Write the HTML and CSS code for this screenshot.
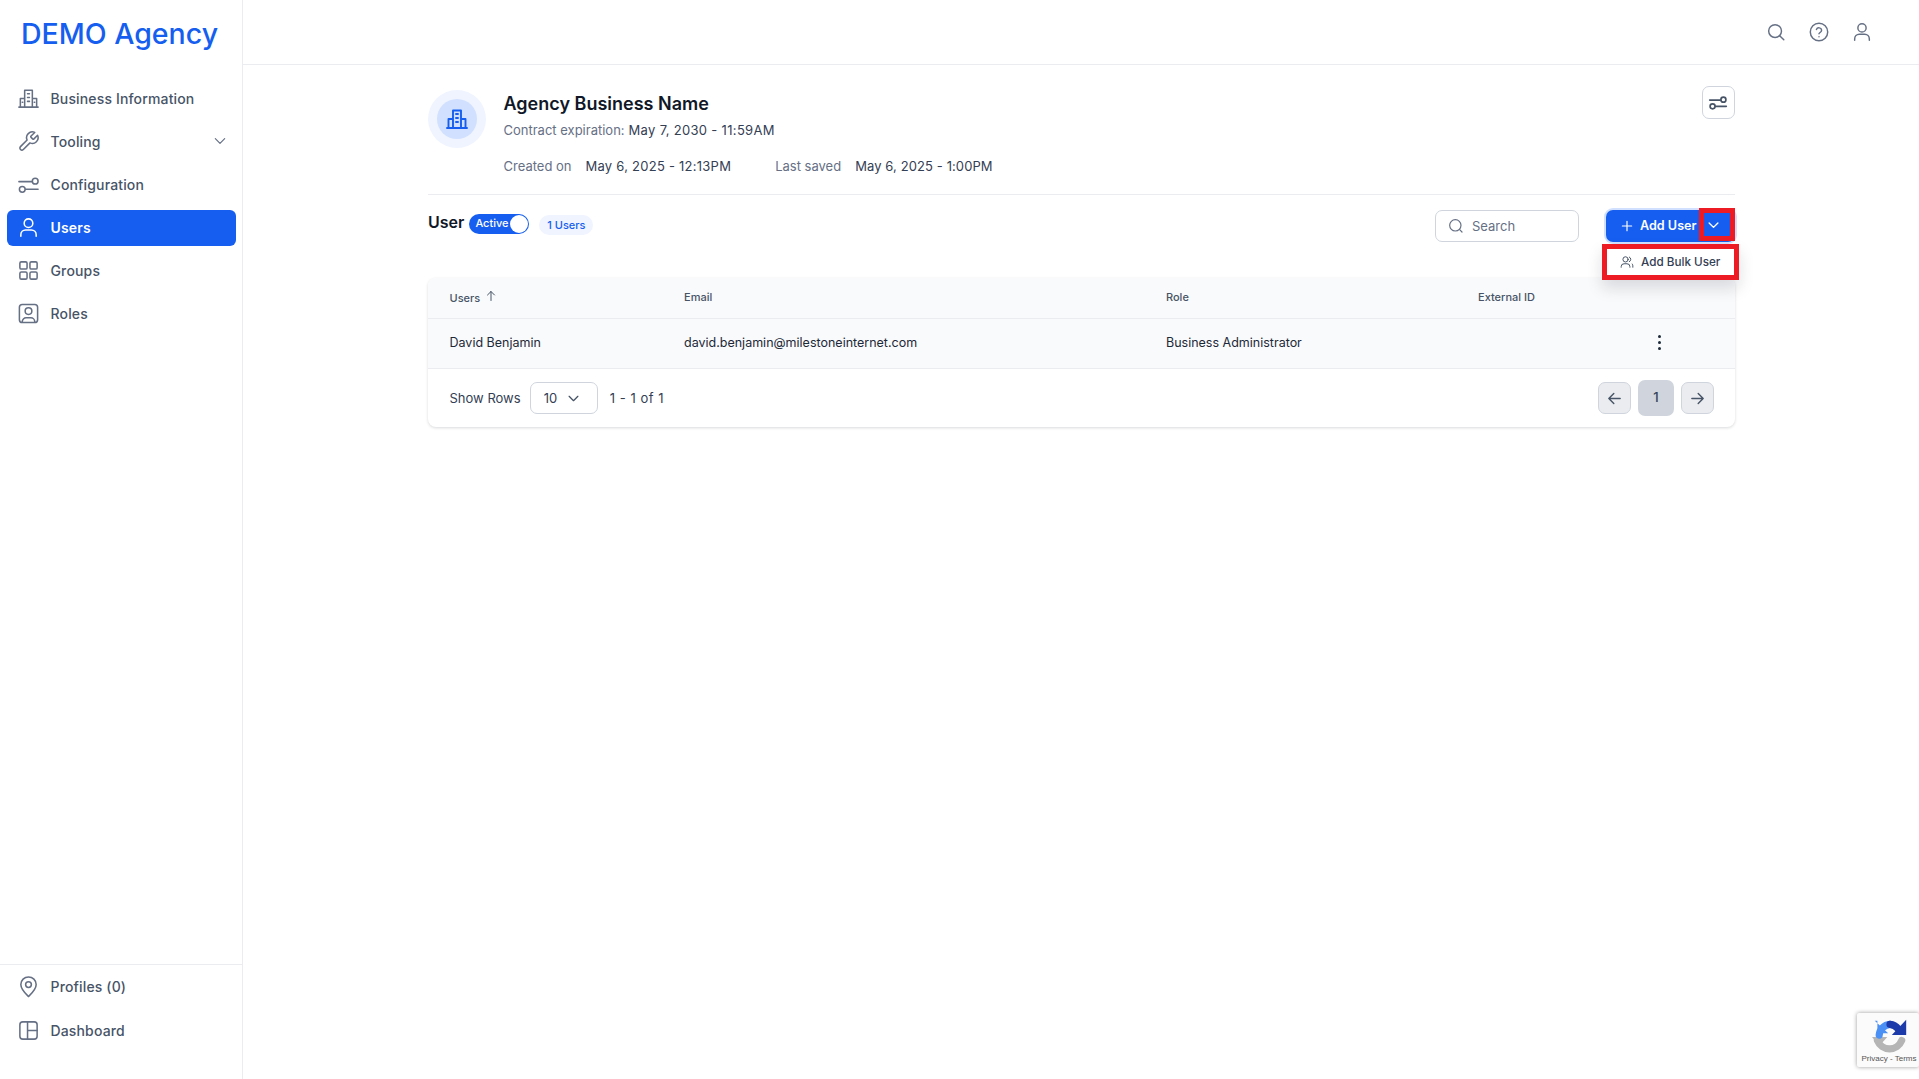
FILE: index.html
```html
<!DOCTYPE html>
<html lang="en">
<head>
<meta charset="utf-8">
<title>Users - DEMO Agency</title>
<link rel="stylesheet" href="styles.css">
</head>
<body>
<aside class="sidebar">
  <div class="logo">DEMO Agency</div>
  <nav class="nav">
    <a class="nav-item"><svg class="ico" viewBox="0 0 24 24"><path d="M2 21h20M3.500 21v-9h4.500M20.500 21v-9H16M8 21V3.500h8V21M11 7h2M11 11h2M11 15h2M5.500 16h.5M18 16h.5"/></svg><span>Business Information</span></a>
    <a class="nav-item"><svg class="ico" viewBox="0 0 24 24"><path d="M14.700 6.300a1 1 0 0 0 0 1.400l1.600 1.600a1 1 0 0 0 1.400 0l3.770-3.770a6 6 0 0 1-7.940 7.940l-6.910 6.910a2.120 2.120 0 0 1-3-3l6.910-6.910a6 6 0 0 1 7.940-7.940l-3.760 3.760z"/></svg><span>Tooling</span><svg class="nav-chev" viewBox="0 0 24 24"><path d="M5 8.500l7 7 7-7"/></svg></a>
    <a class="nav-item"><svg class="ico" viewBox="0 0 24 24"><path d="M2 9h14M9 17h13"/><circle cx="19" cy="8.500" r="3"/><circle cx="5.500" cy="17" r="3"/></svg><span>Configuration</span></a>
    <a class="nav-item active"><svg class="ico" viewBox="0 0 24 24"><circle cx="12" cy="7.500" r="4.500"/><path d="M4 21v-1.500a5 5 0 0 1 5-5h6a5 5 0 0 1 5 5V21"/></svg><span>Users</span></a>
    <a class="nav-item"><svg class="ico" viewBox="0 0 24 24"><rect x="3" y="3" width="7.500" height="7.500" rx="1.500"/><rect x="13.500" y="3" width="7.500" height="7.500" rx="1.500"/><rect x="3" y="13.500" width="7.500" height="7.500" rx="1.500"/><rect x="13.500" y="13.500" width="7.500" height="7.500" rx="1.500"/></svg><span>Groups</span></a>
    <a class="nav-item"><svg class="ico" viewBox="0 0 24 24"><rect x="2.500" y="2.500" width="19" height="19" rx="3"/><circle cx="12" cy="9.500" r="3.500"/><path d="M5.500 21v-.5a4 4 0 0 1 4-4h5a4 4 0 0 1 4 4v.5"/></svg><span>Roles</span></a>
  </nav>
  <div class="side-bottom">
    <a class="nav-item"><svg class="ico" viewBox="0 0 24 24"><path d="M12 22.500c-1-1-8-7-8-12.500a8 8 0 0 1 16 0c0 5.500-7 11.500-8 12.500z"/><circle cx="12" cy="10" r="3"/></svg><span>Profiles (0)</span></a>
    <a class="nav-item"><svg class="ico" viewBox="0 0 24 24"><rect x="3" y="3" width="18" height="18" rx="3"/><path d="M11 3v18M11 12h10"/></svg><span>Dashboard</span></a>
  </div>
</aside>

<div class="main">
  <header class="topbar">
    <svg class="top-ico" viewBox="0 0 24 24"><circle cx="11" cy="11" r="7"/><path d="M16 16l4.500 4.500"/></svg>
    <svg class="top-ico" viewBox="0 0 24 24"><circle cx="12" cy="12" r="9.500"/><path d="M9.200 9.300a2.900 2.900 0 0 1 5.600 1c0 1.900-2.800 2.400-2.800 3.700M12 17.200v.1"/></svg>
    <svg class="top-ico" viewBox="0 0 24 24"><circle cx="12" cy="7.500" r="4.500"/><path d="M4 21v-1.500a5 5 0 0 1 5-5h6a5 5 0 0 1 5 5V21"/></svg>
  </header>

  <section class="content">
    <div class="biz">
      <div class="avatar"><div class="avatar-in"><svg viewBox="0 0 24 24"><path d="M2 21h20M3.500 21v-9h4.500M20.500 21v-9H16M8 21V3.500h8V21M11 7h2M11 11h2M11 15h2"/></svg></div></div>
      <div class="biz-text">
        <h1>Agency Business Name</h1>
        <p class="contract"><span class="muted">Contract expiration:</span> May 7, 2030 - 11:59AM</p>
        <p class="dates"><span class="muted">Created on</span><span class="v1">May 6, 2025 - 12:13PM</span><span class="muted">Last saved</span><span class="v2">May 6, 2025 - 1:00PM</span></p>
      </div>
      <button class="settings"><svg viewBox="0 0 24 24"><path d="M2 8.500h13M9 16h13"/><circle cx="18.500" cy="8" r="3"/><circle cx="5.500" cy="16" r="3"/></svg></button>
    </div>

    <div class="toolbar">
      <h2>User</h2>
      <div class="toggle"><span>Active</span><i></i></div>
      <div class="count">1 Users</div>
      <div class="search"><svg viewBox="0 0 24 24"><circle cx="11" cy="11" r="8.500"/><path d="M17.500 17.500L21 21"/></svg><span>Search</span></div>
      <div class="add">
        <svg class="plus" viewBox="0 0 24 24"><path d="M12 4v16M4 12h16"/></svg><span>Add User</span>
        <svg class="add-chev" viewBox="0 0 24 24"><path d="M5 8l7 7 7-7"/></svg>
        <b class="mark mark-chev"></b>
        <div class="menu"><svg viewBox="0 0 24 24"><circle cx="9.500" cy="7.500" r="4.500"/><path d="M2 21v-1a5 5 0 0 1 5-5h5a5 5 0 0 1 5 5v1M16 3.500a4.500 4.500 0 0 1 0 8M21 15.500a5 5 0 0 1 1 3V21"/></svg><span>Add Bulk User</span></div>
      </div>
    </div>

    <div class="card">
      <div class="row head">
        <div class="c1">Users <svg class="sort" viewBox="0 0 24 24"><path d="M12 21V3M5 10l7-7 7 7"/></svg></div>
        <div class="c2">Email</div>
        <div class="c3">Role</div>
        <div class="c4">External ID</div>
      </div>
      <div class="row body">
        <div class="c1">David Benjamin</div>
        <div class="c2">david.benjamin@milestoneinternet.com</div>
        <div class="c3">Business Administrator</div>
        <div class="c4"></div>
        <div class="dots"><i></i><i></i><i></i></div>
      </div>
      <div class="foot">
        <span>Show Rows</span>
        <div class="select"><span>10</span><svg viewBox="0 0 24 24"><path d="M5 8.500l7 7 7-7"/></svg></div>
        <span class="range">1 - 1 of 1</span>
        <div class="pager">
          <button class="pg"><svg viewBox="0 0 24 24"><path d="M20 12H4M11 5l-7 7 7 7"/></svg></button>
          <button class="pg cur">1</button>
          <button class="pg"><svg viewBox="0 0 24 24"><path d="M4 12h16M13 5l7 7-7 7"/></svg></button>
        </div>
      </div>
    </div>
  </section>
</div>

<div class="recaptcha">
  <svg viewBox="0 0 40 40">
    <path d="M6 25 A14.500 14.500 0 0 0 33 25" fill="none" stroke="#b5b5b5" stroke-width="8"/>
    <path d="M0 21h17l-9 10z" fill="#b5b5b5"/>
    <path d="M8 19 A13 13 0 0 1 20 7" fill="none" stroke="#4a90f5" stroke-width="8"/>
    <path d="M20 7 A13 13 0 0 1 29 12" fill="none" stroke="#1c3aa9" stroke-width="8"/>
    <path d="M3 3h3v14h12z" fill="#4a90f5"/>
    <path d="M38 2v17H22z" fill="#1c3aa9"/>
  </svg>
  <small>Privacy - Terms</small>
</div>
</body>
</html>
```
FILE: styles.css
```css
* { box-sizing: border-box; }
html, body { height: 100%; }
body {
  margin: 0;
  display: flex;
  min-height: 1079px;
  font-family: Inter, "Noto Sans", sans-serif;
  color: #101828;
  background: #fff;
  overflow: hidden;
}
svg { fill: none; stroke: currentColor; stroke-linecap: round; stroke-linejoin: round; }

/* sidebar */
.sidebar {
  width: 243px;
  height: 1079px;
  flex: none;
  display: flex;
  flex-direction: column;
  border-right: 1px solid #eaecf0;
}
.logo {
  padding: 15px 0 0 21px;
  height: 80px;
  font-size: 28.500px;
  line-height: 38px;
  font-weight: 500;
  color: #155eef;
}
.nav { display: flex; flex-direction: column; gap: 7.200px; padding: 0 6px 0 7px; }
.nav-item {
  display: flex;
  align-items: center;
  height: 36px;
  padding-left: 10px;
  padding-right: 8px;
  gap: 10.500px;
  border-radius: 6px;
  font-size: 14px;
  font-weight: 500;
  letter-spacing: 0.15px;
  color: #475467;
}
.nav-item .ico { width: 23px; height: 23px; stroke: #667085; stroke-width: 1.6; flex: none; }
.nav-chev { width: 16px; height: 16px; margin-left: auto; stroke: #667085; stroke-width: 1.8; }
.nav-item.active { background: #155eef; color: #fff; font-weight: 600; }
.nav-item.active .ico { stroke: #fff; }
.side-bottom {
  margin-top: auto;
  height: 115px;
  padding: 3px 6px 0 7px;
  border-top: 1px solid #eaecf0;
  display: flex;
  flex-direction: column;
  gap: 8px;
}

/* main */
.main { flex: 1; min-width: 0; }
.topbar {
  height: 65px;
  border-bottom: 1px solid #eaecf0;
  display: flex;
  justify-content: flex-end;
  align-items: center;
  gap: 21px;
  padding: 0 46px 0 0;
  color: #667085;
}
.top-ico { width: 22px; height: 22px; stroke-width: 1.6; }
.content { padding: 0 184px 0 185px; }

/* business header */
.biz {
  display: flex;
  height: 130px;
  border-bottom: 1px solid #eaecf0;
  padding-top: 25px;
}
.avatar {
  width: 58px; height: 58px; border-radius: 50%;
  background: #eff4ff;
  display: flex; align-items: center; justify-content: center;
  flex: none;
}
.avatar-in {
  width: 40px; height: 40px; border-radius: 50%;
  background: #d1e0ff;
  display: flex; align-items: center; justify-content: center;
  color: #155eef;
}
.avatar-in svg { width: 24px; height: 24px; stroke-width: 1.9; }
.biz-text { margin-left: 17.500px; flex: 1; }
h1 { margin: 0; font-size: 18px; line-height: 28px; font-weight: 600; color: #101828; }
.contract { margin: 0; font-size: 13px; line-height: 24px; letter-spacing: 0.32px; color: #344054; }
.dates { margin: 12px 0 0; font-size: 13px; line-height: 24px; letter-spacing: 0.2px; display: flex; color: #344054; }
.muted { color: #667085; letter-spacing: 0; }
.v1 { margin-left: 14px; margin-right: 44px; letter-spacing: 0.25px; }
.v2 { margin-left: 14px; letter-spacing: 0.1px; }
.settings {
  width: 33px; height: 33px; margin-top: -4px; padding: 0;
  border: 1px solid #d0d5dd; border-radius: 7px; background: #fff;
  display: flex; align-items: center; justify-content: center;
  color: #475467;
}
.settings svg { width: 20px; height: 20px; stroke-width: 2; margin-left: -1px; }

/* toolbar */
.toolbar { display: flex; align-items: center; height: 83px; padding-bottom: 22px; }
h2 { margin: -7px 0 0; font-size: 16px; font-weight: 600; line-height: 24px; color: #101828; }
.toggle {
  margin-left: 5px; margin-top: -4px;
  width: 60px; height: 20px; border-radius: 10px;
  background: #155eef;
  display: flex; align-items: center; justify-content: space-between;
  padding: 0 1px 0 6px;
  color: #fff; font-size: 11px; font-weight: 500;
}
.toggle span { margin-top: -1px; }
.toggle i { width: 18px; height: 18px; border-radius: 50%; background: #fff; }
.count {
  margin-left: 10px; margin-top: -2px;
  width: 54px; height: 20px; border-radius: 10px;
  background: #eff4ff; color: #155eef;
  font-size: 11px; font-weight: 500; line-height: 20px; text-align: center;
}
.search {
  margin-left: auto;
  width: 144px; height: 32px;
  border: 1px solid #d0d5dd; border-radius: 7px;
  display: flex; align-items: center; gap: 8px; padding-left: 12px;
  font-size: 13px; color: #667085;
}
.search svg { width: 16px; height: 16px; stroke-width: 1.8; }
.add {
  position: relative;
  margin-left: 27px;
  width: 129px; height: 32px;
  border-radius: 7px;
  background: #155eef; color: #fff;
  box-shadow: 0 0 0 2px #d1e0ff;
  display: flex; align-items: center; padding-left: 14px;
  font-size: 12.600px; font-weight: 600;
}
.plus { width: 14px; height: 14px; stroke-width: 2; margin-right: 6px; flex: none; }
.add-chev { width: 15px; height: 15px; stroke-width: 2.2; margin-left: 9px; flex: none; }
.mark { position: absolute; border: 5px solid #ed1c24; }
.mark-chev { left: 93px; top: -2px; width: 36px; height: 33px; }
.menu {
  position: absolute; z-index: 2;
  left: -4px; top: 34px; width: 137px; height: 36px;
  border: 5px solid #ed1c24;
  background: #fff;
  box-shadow: 0 8px 16px rgba(16, 24, 40, 0.14);
  display: flex; align-items: center; padding-left: 13px; gap: 7px;
  font-size: 11.700px; font-weight: 500; color: #344054;
}
.menu svg { width: 14px; height: 14px; stroke-width: 1.7; stroke: #475467; flex: none; }

/* table card */
.card {
  border-radius: 8px;
  background: #fff;
  box-shadow: 0 1px 3px rgba(16, 24, 40, 0.16);
}
.row {
  position: relative;
  display: grid;
  grid-template-columns: 234.500px 482px 312px 1fr;
  padding-left: 21.500px;
  align-items: center;
  background: #f9fafb;
  border-bottom: 1px solid #eaecf0;
}
.head { height: 41px; border-radius: 8px 8px 0 0; font-size: 11px; font-weight: 500; color: #475467; padding-bottom: 2px; }
.body { height: 50px; font-size: 12.500px; color: #1d2939; padding-bottom: 3px; }
.sort { width: 12px; height: 12px; stroke-width: 2; margin-left: 2px; vertical-align: 0; color: #475467; }
.dots { position: absolute; left: 1230px; top: 16px; display: flex; flex-direction: column; gap: 3px; }
.dots i { width: 3px; height: 3px; border-radius: 50%; background: #1d2939; }
.foot {
  height: 58px;
  display: flex; align-items: center;
  padding: 0 21px 0 21.500px;
  font-size: 13px; color: #344054;
}
.select {
  margin: 0 12px 0 9px;
  width: 68px; height: 32px;
  border: 1px solid #d0d5dd; border-radius: 7px;
  display: flex; align-items: center; justify-content: space-between;
  padding: 0 16px 0 13px;
}
.select svg { width: 15px; height: 15px; stroke-width: 2; color: #475467; }
.range { letter-spacing: 0.55px; }
.pager { margin-left: auto; display: flex; align-items: center; gap: 7px; }
.pg {
  width: 33px; height: 32px; padding: 0;
  border: 1px solid #d0d5dd; border-radius: 7px;
  background: #eaecf0; color: #475467;
  display: flex; align-items: center; justify-content: center;
  font: 500 13px Inter, sans-serif;
}
.pg svg { width: 17px; height: 17px; stroke-width: 2; }
.pg.cur { width: 36px; height: 36px; background: #d0d5dd; border: 0; padding-bottom: 3px; color: #344054; }

/* recaptcha */
.recaptcha {
  position: absolute; left: 1857px; top: 1013px;
  width: 62px; height: 54px;
  background: #fbfbfb;
  box-shadow: 0 0 4px rgba(0, 0, 0, 0.4);
  border-radius: 2px;
  display: flex; flex-direction: column; align-items: center; padding-top: 5px;
  overflow: hidden;
}
.recaptcha svg { width: 36px; height: 36px; stroke: none; margin-left: 4px; flex: none; }
.recaptcha small { font: 8px "Liberation Sans", sans-serif; color: #555; white-space: nowrap; margin-left: 2px; }
```
